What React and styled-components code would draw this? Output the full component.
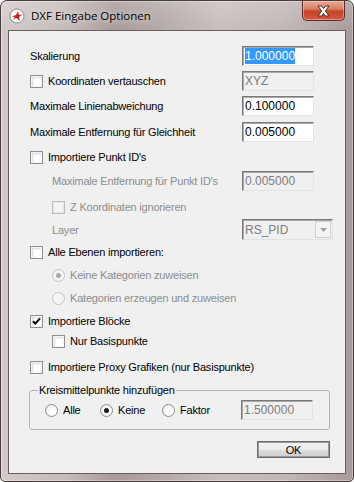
import styled, { createGlobalStyle } from 'styled-components';

const GlobalStyle = createGlobalStyle`
  html, body { margin: 0; padding: 0; background: #ffffff; }
  body {
    font-family: 'Liberation Sans', Arial, sans-serif;
    font-size: 11px;
    letter-spacing: -0.2px;
    color: #000;
  }
`;

//Small drawings: checkbox, radio, window icon, close glyph

const Check = ({ checked, disabled }) => (
  <CheckBox $disabled={disabled}>
    {checked && (
      <svg width="11" height="11" viewBox="0 0 11 11">
        <path d="M2 5.2 L4.3 7.6 L9 2.4" fill="none" stroke="#000" strokeWidth="2" />
      </svg>
    )}
  </CheckBox>
);

const Radio = ({ checked, disabled }) => (
  <RadioDot $disabled={disabled}>{checked && <Dot $disabled={disabled} />}</RadioDot>
);

const AppIcon = () => (
  <svg width="16" height="16" viewBox="0 0 16 16">
    <circle cx="8" cy="8" r="7" fill="#fff" stroke="#8a8a8a" strokeWidth="1" />
    <path d="M3 8.5 L7 7 L9 3 L9.8 7 L13.5 6.5 L10 9 L11 13 L7.5 10 L4 11.5 L6 9 Z" fill="#d11a1a" />
  </svg>
);

const CloseGlyph = () => (
  <svg width="15" height="12" viewBox="0 0 15 12">
    <path
      d="M2 1 H5.5 L7.5 3.6 L9.5 1 H13 L9.4 6 L13 11 H9.5 L7.5 8.4 L5.5 11 H2 L5.6 6 Z"
      fill="#fff"
      stroke="#4a2a22"
      strokeWidth="1"
      strokeLinejoin="round"
    />
  </svg>
);

const App = () => {
  return (
    <>
      <GlobalStyle />
      <Window>
        <TitleBar>
          <AppIcon />
          <Title>DXF Eingabe Optionen</Title>
          <CloseButton>
            <CloseGlyph />
          </CloseButton>
        </TitleBar>
        <Client>
          <Row>
            <Label>Skalierung</Label>
            <Input>
              <Selected>1.000000</Selected>
            </Input>
          </Row>
          <Row $gap={5}>
            <Option>
              <Check />
              <span>Koordinaten vertauschen</span>
            </Option>
            <Input $disabled>XYZ</Input>
          </Row>
          <Row $gap={5}>
            <Label>Maximale Linienabweichung</Label>
            <Input>0.100000</Input>
          </Row>
          <Row $gap={6}>
            <Label>Maximale Entfernung für Gleichheit</Label>
            <Input>0.005000</Input>
          </Row>
          <Row $gap={5}>
            <Option>
              <Check />
              <span>Importiere Punkt ID's</span>
            </Option>
          </Row>
          <Row $gap={4} $indent={22}>
            <Label $disabled>Maximale Entfernung für Punkt ID's</Label>
            <Input $disabled>0.005000</Input>
          </Row>
          <Row $gap={6} $indent={22}>
            <Option $disabled>
              <Check disabled />
              <span>Z Koordinaten ignorieren</span>
            </Option>
          </Row>
          <Row $gap={2} $indent={22}>
            <Label $disabled>Layer</Label>
            <Combo>
              <span>RS_PID</span>
              <ComboButton>
                <svg width="7" height="4" viewBox="0 0 7 4">
                  <path d="M0 0 H7 L3.5 4 Z" fill="#a0a0a0" />
                </svg>
              </ComboButton>
            </Combo>
          </Row>
          <Row $gap={3}>
            <Option>
              <Check />
              <span>Alle Ebenen importieren:</span>
            </Option>
          </Row>
          <Row $gap={3} $indent={22}>
            <Option $disabled>
              <Radio checked disabled />
              <span>Keine Kategorien zuweisen</span>
            </Option>
          </Row>
          <Row $gap={3} $indent={22}>
            <Option $disabled>
              <Radio disabled />
              <span>Kategorien erzeugen und zuweisen</span>
            </Option>
          </Row>
          <Row $gap={3}>
            <Option>
              <Check checked />
              <span>Importiere Blöcke</span>
            </Option>
          </Row>
          <Row $indent={22}>
            <Option>
              <Check />
              <span>Nur Basispunkte</span>
            </Option>
          </Row>
          <Row $gap={6}>
            <Option>
              <Check />
              <span>Importiere Proxy Grafiken (nur Basispunkte)</span>
            </Option>
          </Row>
          <Group>
            <Legend>Kreismittelpunkte hinzufügen</Legend>
            <GroupRow>
              <Option>
                <Radio />
                <span>Alle</span>
              </Option>
              <Option>
                <Radio checked />
                <span>Keine</span>
              </Option>
              <Option>
                <Radio />
                <span>Faktor</span>
              </Option>
              <Input $disabled>1.500000</Input>
            </GroupRow>
          </Group>
          <Footer>
            <Button>OK</Button>
          </Footer>
        </Client>
      </Window>
    </>
  );
};

//STYLING
const Window = styled.div`
  box-sizing: border-box;
  width: 354px;
  height: 482px;
  border: 1px solid #4b3d3e;
  border-radius: 7px 7px 5px 5px;
  padding: 0 7px 7px;
  display: flex;
  flex-direction: column;
  background:
    linear-gradient(180deg, rgba(255, 255, 255, 0.18) 0px, rgba(255, 255, 255, 0) 30px),
    linear-gradient(90deg, #d2caca 0%, #c6bbbb 18%, #a99a9a 32%, #b4a7a7 45%, #c8bebe 62%, #c2b7b7 80%, #a89a9a 100%);
  background-color: #9e8c8d;
  box-shadow: inset 0 0 0 1px rgba(255, 255, 255, 0.35);
`;

const TitleBar = styled.div`
  height: 29px;
  display: flex;
  align-items: center;
  padding-left: 1px;
`;

const Title = styled.span`
  margin-left: 6px;
  font-family: 'Open Sans', 'Noto Sans', sans-serif;
  font-size: 11.5px;
  letter-spacing: 0;
  color: #000;
  text-shadow: 0 0 6px rgba(255, 255, 255, 0.9);
`;

const CloseButton = styled.div`
  margin-left: auto;
  margin-right: 1px;
  align-self: flex-start;
  width: 43px;
  height: 20px;
  box-sizing: border-box;
  border: 1px solid #5a2c25;
  border-top: none;
  border-radius: 0 0 5px 5px;
  display: flex;
  align-items: center;
  justify-content: center;
  background: linear-gradient(180deg, #e9a996 0%, #d9826a 40%, #c74326 55%, #d4583a 100%);
  box-shadow: inset 0 0 0 1px rgba(255, 220, 210, 0.45);
`;

const Client = styled.div`
  flex: 1;
  box-sizing: border-box;
  border: 1px solid #6b5d5e;
  background: #f0f0f0;
  padding: 15px 15px 0 21px;
  display: flex;
  flex-direction: column;
`;

const Row = styled.div`
  display: grid;
  grid-template-columns: ${(p) => 212 - (p.$indent || 0)}px auto;
  align-items: center;
  height: 20px;
  margin-top: ${(p) => p.$gap || 0}px;
  padding-left: ${(p) => p.$indent || 0}px;
  white-space: nowrap;
`;

const Label = styled.span`
  color: ${(p) => (p.$disabled ? '#8d8d8d' : '#000')};
`;

const Option = styled.label`
  display: flex;
  align-items: center;
  gap: 5px;
  white-space: nowrap;
  color: ${(p) => (p.$disabled ? '#8d8d8d' : '#000')};
`;

const CheckBox = styled.span`
  box-sizing: border-box;
  flex-shrink: 0;
  width: 13px;
  height: 13px;
  display: flex;
  align-items: center;
  justify-content: center;
  border: 1px solid ${(p) => (p.$disabled ? '#bcbcbc' : '#8f8f8f')};
  background: ${(p) => (p.$disabled ? '#f4f4f4' : '#fff')};
  box-shadow: ${(p) =>
    p.$disabled ? 'inset 0 0 0 1px #e6e6e6' : 'inset 0 0 0 1px #f4f4f4, inset 1px 1px 2px 1px #dadada'};
`;

const RadioDot = styled.span`
  box-sizing: border-box;
  flex-shrink: 0;
  width: 13px;
  height: 13px;
  border-radius: 50%;
  display: flex;
  align-items: center;
  justify-content: center;
  border: 1px solid ${(p) => (p.$disabled ? '#c4c4c4' : '#8f8f8f')};
  background: ${(p) =>
    p.$disabled ? '#f4f4f4' : 'radial-gradient(circle at 60% 60%, #ffffff 30%, #dcdcdc 100%)'};
`;

const Dot = styled.span`
  width: 5px;
  height: 5px;
  border-radius: 50%;
  background: ${(p) => (p.$disabled ? '#a8a8a8' : '#1a1a1a')};
`;

const Input = styled.div`
  box-sizing: border-box;
  width: 72px;
  height: 20px;
  padding: 0 2px;
  display: flex;
  align-items: center;
  font-family: 'Liberation Sans', Arial, sans-serif;
  font-size: 12px;
  letter-spacing: 0;
  color: ${(p) => (p.$disabled ? '#7d7d7d' : '#000')};
  background: ${(p) => (p.$disabled ? '#f0f0f0' : '#fff')};
  border: 1px solid;
  border-color: #7a7a7a #e3e3e3 #e3e3e3 #7a7a7a;
  box-shadow: inset 1px 1px 0 #a8a8a8;
`;

const Selected = styled.span`
  background: #3399ff;
  color: #fff;
  padding: 1px 0;
`;

const Combo = styled.div`
  box-sizing: border-box;
  width: 91px;
  height: 21px;
  padding: 0 1px 0 2px;
  display: flex;
  align-items: center;
  justify-content: space-between;
  font-size: 12px;
  letter-spacing: 0;
  color: #7d7d7d;
  background: #f0f0f0;
  border: 1px solid;
  border-color: #7a7a7a #e3e3e3 #e3e3e3 #7a7a7a;
  box-shadow: inset 1px 1px 0 #a8a8a8;
`;

const ComboButton = styled.span`
  box-sizing: border-box;
  width: 16px;
  height: 17px;
  display: flex;
  align-items: center;
  justify-content: center;
  border: 1px solid #d0d0d0;
  background: #f4f4f4;
`;

const Group = styled.fieldset`
  box-sizing: border-box;
  height: 46px;
  margin: 7px 0 0 -1px;
  padding: 0 0 0 15px;
  border: 1px solid #b4b4b4;
  border-radius: 3px;
`;

const Legend = styled.legend`
  margin-left: -7px;
  padding: 0 1px;
  line-height: 13px;
`;

const GroupRow = styled.div`
  display: grid;
  grid-template-columns: 55px 62px 79px auto;
  align-items: center;
  margin-top: 3px;
`;

const Footer = styled.div`
  display: flex;
  justify-content: flex-end;
  margin-top: 11px;
`;

const Button = styled.div`
  box-sizing: border-box;
  width: 73px;
  height: 17px;
  display: flex;
  align-items: center;
  justify-content: center;
  border: 1px solid #6a6a6a;
  background: linear-gradient(180deg, #f2f2f2 0%, #ebebeb 50%, #dddddd 51%, #cfcfcf 100%);
  box-shadow: inset 0 0 0 1px #9a9a9a;
`;

export default App;
